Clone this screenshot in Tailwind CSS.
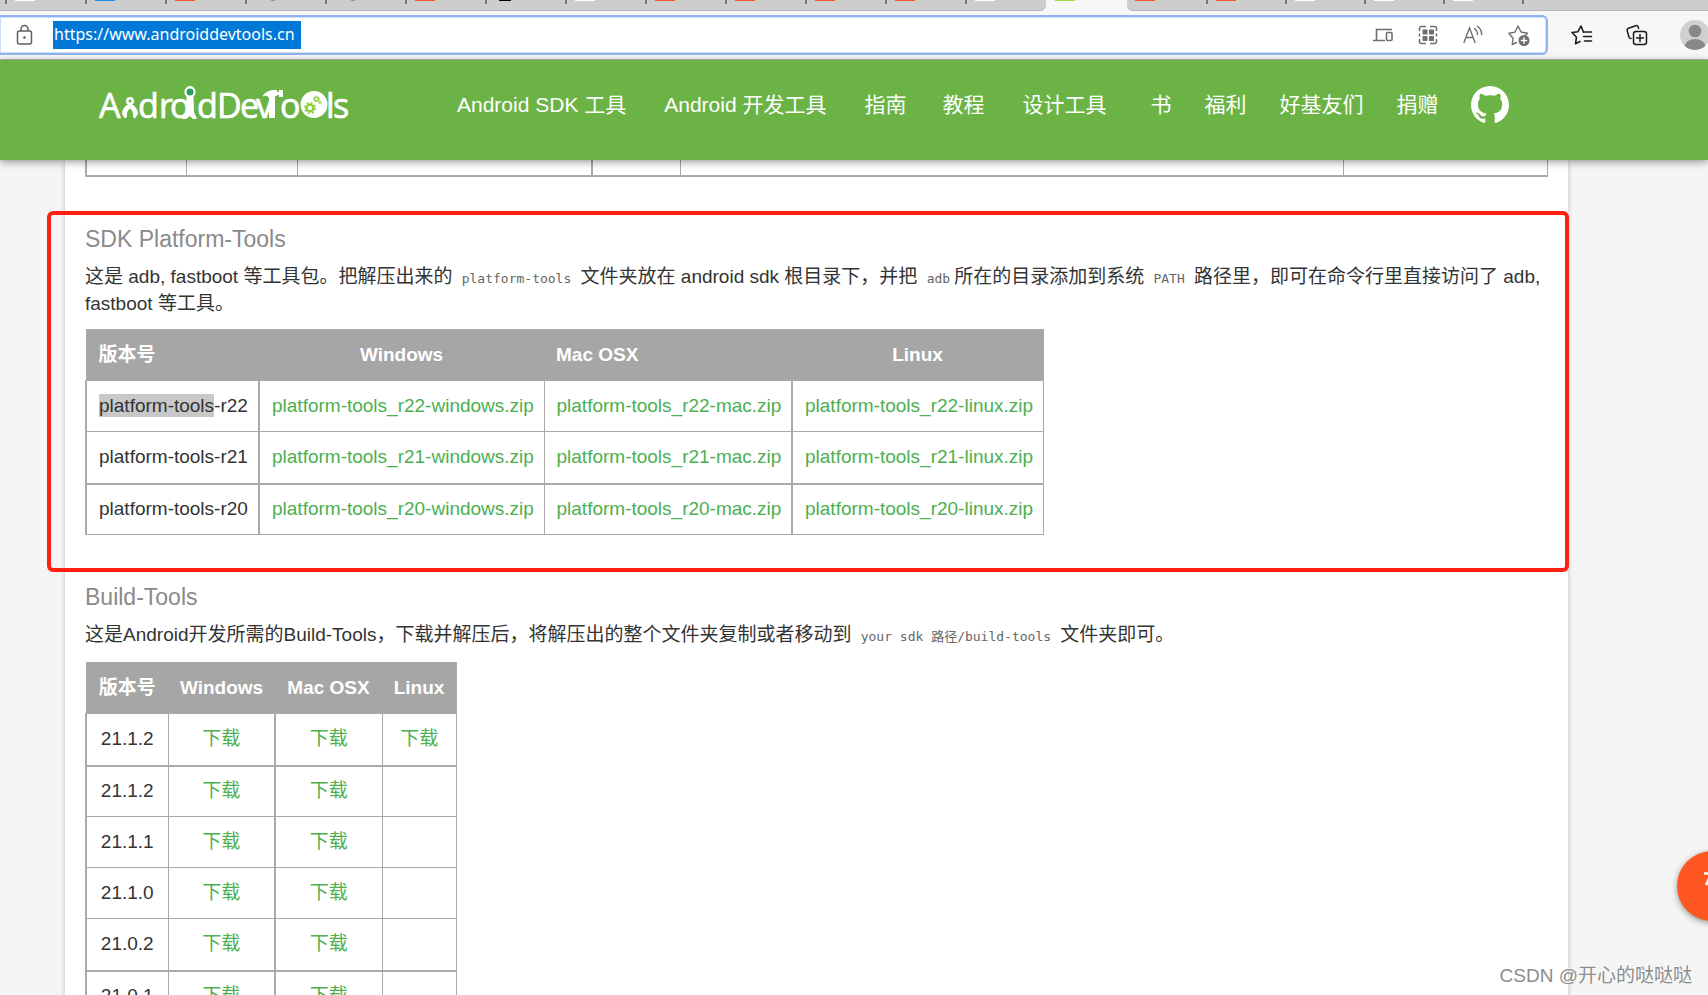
<!DOCTYPE html>
<html lang="zh-CN">
<head>
<meta charset="utf-8">
<title>AndroidDevTools</title>
<script src="https://cdn.jsdelivr.net/npm/@tailwindcss/browser@4"></script>
</head>
<body class="relative flex h-screen flex-col overflow-hidden bg-[#f5f5f5] font-['Liberation_Sans','Noto_Sans_CJK_SC',sans-serif] text-[19px] text-[#333]">

<!-- Browser tab strip -->
<div class="flex h-[11px] w-full shrink-0 bg-[#f7f7f7]">
  <div class="flex w-[1046px] shrink-0 rounded-br-md border-b border-[#b8b8b8] bg-[#cdcdcd] pl-[5px]">
    <div class="w-20 shrink-0"><div class="flex h-1 border-l-2 border-[#777] pl-2"><i class="h-px w-5 bg-white"></i></div></div>
    <div class="w-20 shrink-0"><div class="flex h-1 border-l-2 border-[#777] pl-2"><i class="h-px w-5 bg-[#1e88f0]"></i></div></div>
    <div class="w-20 shrink-0"><div class="flex h-1 border-l-2 border-[#777] pl-2"><i class="h-px w-5 bg-[#fc5531]"></i></div></div>
    <div class="w-20 shrink-0"><div class="flex h-1 border-l-2 border-[#777] pl-6"><i class="h-px w-1 bg-[#999]"></i></div></div>
    <div class="w-20 shrink-0"><div class="flex h-1 border-l-2 border-[#777] pl-6"><i class="h-px w-1 bg-[#999]"></i></div></div>
    <div class="w-20 shrink-0"><div class="flex h-1 border-l-2 border-[#777] pl-2"><i class="h-px w-5 bg-[#fc5531]"></i></div></div>
    <div class="w-20 shrink-0"><div class="flex h-1 border-l-2 border-[#777] pl-3"><i class="h-px w-3 bg-black"></i></div></div>
    <div class="w-20 shrink-0"><div class="flex h-1 border-l-2 border-[#777] pl-2"><i class="h-px w-5 bg-white"></i></div></div>
    <div class="w-20 shrink-0"><div class="flex h-1 border-l-2 border-[#777] pl-2"><i class="h-px w-5 bg-[#fc5531]"></i></div></div>
    <div class="w-20 shrink-0"><div class="flex h-1 border-l-2 border-[#777] pl-2"><i class="h-px w-5 bg-[#fc5531]"></i></div></div>
    <div class="w-20 shrink-0"><div class="flex h-1 border-l-2 border-[#777] pl-2"><i class="h-px w-5 bg-[#fc5531]"></i></div></div>
    <div class="w-20 shrink-0"><div class="flex h-1 border-l-2 border-[#777] pl-2"><i class="h-px w-5 bg-[#fc5531]"></i></div></div>
    <div class="w-20 shrink-0"><div class="flex h-1 border-l-2 border-[#777] pl-2"><i class="h-px w-5 bg-white"></i></div></div>
  </div>
  <div class="flex w-[81px] shrink-0 pl-[9px]"><i class="h-px w-5 bg-[#9be03c]"></i></div>
  <div class="flex flex-1 rounded-bl-md border-b border-[#b8b8b8] bg-[#cdcdcd]">
    <div class="w-[79px] shrink-0"><div class="flex h-1 pl-2"><i class="h-px w-5 bg-[#fc5531]"></i></div></div>
    <div class="w-[79px] shrink-0"><div class="flex h-1 border-l-2 border-[#777] pl-2"><i class="h-px w-5 bg-[#fc5531]"></i></div></div>
    <div class="w-[79px] shrink-0"><div class="flex h-1 border-l-2 border-[#777] pl-2"><i class="h-px w-5 bg-white"></i></div></div>
    <div class="w-[79px] shrink-0"><div class="flex h-1 border-l-2 border-[#777] pl-2"><i class="h-px w-5 bg-white"></i></div></div>
    <div class="w-[79px] shrink-0"><div class="flex h-1 border-l-2 border-[#777] pl-2"><i class="h-px w-5 bg-white"></i></div></div>
    <div class="w-[79px] shrink-0"><div class="h-1 border-l-2 border-[#777]"></div></div>
  </div>
</div>

<!-- Browser toolbar -->
<div class="flex h-[49px] w-full shrink-0 items-center overflow-hidden border-b border-[#b5b5b5] bg-[#f7f7f7]">
  <div class="flex h-10 flex-1 items-center rounded-r-md border-y-2 border-r-2 border-[#90b3ee] bg-white pl-4 pr-[15px] ring-1 ring-inset ring-[#cfe0fa]">
    <button type="button" aria-label="站点信息" class="mr-5 text-[#5f5f5f]">
      <svg width="17" height="22" viewBox="0 0 17 22" fill="none" stroke="currentColor" stroke-width="1.5"><rect x="1.5" y="7" width="14" height="13" rx="2"/><path d="M5 7V5a3.5 3.5 0 0 1 7 0v2"/><circle cx="8.500" cy="13.500" r="1.300" fill="currentColor" stroke="none"/></svg>
    </button>
    <input type="text" aria-label="地址" value="https://www.androiddevtools.cn" class="h-7 w-[248px] bg-[#0078d7] pb-0.5 pl-px font-['Noto_Sans',sans-serif] text-[16px] text-white outline-none">
    <div class="ml-auto flex items-center gap-[23px] text-[#6e6e6e]">
      <button type="button" aria-label="发送到设备"><svg width="22" height="22" viewBox="0 0 22 22" fill="none" stroke="currentColor" stroke-width="1.600"><path d="M4.500 16V5.500H20M1 16.500h12"/><rect x="14.500" y="8.500" width="5.500" height="8" rx="1"/></svg></button>
      <button type="button" aria-label="应用"><svg width="22" height="22" viewBox="0 0 22 22" fill="none" stroke="currentColor" stroke-width="1.500"><path d="M2.500 7V4.500a2 2 0 0 1 2-2H9M13 2.500h4.500a2 2 0 0 1 2 2V7M2.500 15v2.500a2 2 0 0 0 2 2H9M13 19.500h4.500a2 2 0 0 0 2-2V15M2.500 9.500v3M19.500 9.500v3"/><g fill="currentColor" stroke="none"><rect x="5.500" y="5.500" width="5" height="5" rx=".7"/><rect x="12" y="5.500" width="5" height="5" rx=".7"/><rect x="5.500" y="12" width="5" height="5" rx=".7"/><rect x="12" y="12" width="5" height="5" rx=".7"/></g></svg></button>
      <button type="button" aria-label="大声朗读"><svg width="22" height="22" viewBox="0 0 22 22" fill="none" stroke="currentColor" stroke-width="1.400" stroke-linecap="round"><path d="M2 18.500 7.500 4 13 18.500M4 13.500h7M12.500 4.500q3 2.500 3 6M15.500 2.200q4 3 4.200 8.300"/></svg></button>
      <button type="button" aria-label="添加到收藏夹"><svg width="24" height="24" viewBox="0 0 24 24" fill="none" stroke="currentColor" stroke-width="1.400" stroke-linejoin="round" stroke-linecap="round"><path d="M9.500 19.500 5.200 21.500l.8-6.300L1.800 10.300l6.200-1.200L11 3l3 6 6.500 1.200-2 2"/><circle cx="17" cy="17.500" r="5.500" fill="currentColor" stroke="none"/><path d="M17 14.800v5.400M14.300 17.500h5.400" stroke="#fff"/></svg></button>
    </div>
  </div>
  <div class="flex w-40 shrink-0 items-center text-[#1b1b1b]">
    <button type="button" aria-label="收藏夹" class="ml-[23px]"><svg width="22" height="22" viewBox="0 0 22 22" fill="none" stroke="currentColor" stroke-width="1.600" stroke-linejoin="round" stroke-linecap="round"><path d="M12.500 8.200 10 2 7 7.700 1 8.500l4.500 4.700-1 6.500L9 17.500M13.500 8h7M12.500 12.500h8M13.500 17h7"/></svg></button>
    <button type="button" aria-label="集锦" class="ml-[33px]"><svg width="22" height="22" viewBox="0 0 22 22" fill="none" stroke="currentColor" stroke-width="1.500" stroke-linejoin="round" stroke-linecap="round"><path d="M5 14.500q-1.500.2-2-1.200L1.200 6.500q-.4-1.600 1.200-2.200L9.800 1.700q1.700-.5 2.300 1l.5 1.500"/><rect x="7.500" y="7.500" width="13" height="13" rx="2.500"/><path d="M14 10.500v7M10.500 14h7"/></svg></button>
    <button type="button" aria-label="个人资料" class="ml-8 shrink-0"><svg width="30" height="30" viewBox="0 0 30 30"><defs><clipPath id="av"><circle cx="15" cy="15" r="15"/></clipPath></defs><g clip-path="url(#av)"><path fill="#d2d0ce" d="M0 0h30v30H0z"/><circle cx="15" cy="11" r="6.300" fill="#8a8886"/><ellipse cx="15" cy="27" rx="10.500" ry="8" fill="#8a8886"/></g></svg></button>
  </div>
</div>

<!-- Site header -->
<header class="relative z-10 flex h-[100px] shrink-0 items-center bg-[#6bb345] pb-[10px] pl-[99px] text-white shadow-[0_2px_8px_rgba(0,0,0,0.4)]">
  <a href="#" aria-label="AndroidDevTools" class="mr-[106px] shrink-0">
    <svg width="252" height="48" viewBox="0 0 252 48" fill="#fff">
      <text y="37" font-family="Open Sans, Noto Sans, sans-serif" font-size="34" stroke="#fff" stroke-width=".7" x="0 39 60 71 98 118 141 157 181 227 234">AdrodDevols</text>
      <path d="M31 16a4 4 0 0 1 2 7.500c4 2 6 6 6 9.500l-3 4.500-2-1.500c.5-4-.5-7-3-8.500-2.500 1.500-3.500 4.500-3 8.500l-2 1.500-3-4.500c0-3.500 2-7.500 6-9.500A4 4 0 0 1 31 16z"/><circle cx="31" cy="20" r="1.500" fill="#6bb345"/>
      <path d="M91 5a6 6 0 0 1 3.500 10.500L95 31l3 7h-4l-3-3-4 3h-4l4-7 .5-15.500A6 6 0 0 1 91 5z"/><circle cx="91" cy="11" r="3.500" fill="#2c9c62"/>
      <path d="M163 16c3-5 7-7 12-7h3v2h2V9h4v7h-4v-2h-2v1h-2v22h-6V17l-2-2q-3-1-5 1z"/>
      <circle cx="215" cy="23.500" r="13.500"/>
      <g fill="none" stroke="#8bd03c"><circle cx="211" cy="27" r="3.400" stroke-width="2.400"/><circle cx="211" cy="27" r="5.200" stroke-width="1.600" stroke-dasharray="2 2.080"/><circle cx="217.500" cy="18" r="1.900" stroke-width="1.400"/><circle cx="217.500" cy="18" r="3" stroke-width="1" stroke-dasharray="1.200 1.150"/><circle cx="221" cy="21.500" r="1.200" stroke-width="1"/></g>
    </svg>
  </a>
  <nav class="flex items-center whitespace-nowrap text-[21px]">
    <a href="#" class="mr-[38px]">Android SDK 工具</a>
    <a href="#" class="mr-[38px]">Android 开发工具</a>
    <a href="#" class="mr-9">指南</a>
    <a href="#" class="mr-[38px]">教程</a>
    <a href="#" class="mr-11">设计工具</a>
    <a href="#" class="mr-[33px]">书</a>
    <a href="#" class="mr-[33px]">福利</a>
    <a href="#" class="mr-[33px]">好基友们</a>
    <a href="#" class="mr-[33px]">捐赠</a>
    <a href="#" aria-label="GitHub"><svg width="38" height="38" viewBox="0 0 16 16" fill="#fff"><path d="M8 0C3.580 0 0 3.580 0 8c0 3.540 2.290 6.530 5.470 7.590.4.070.55-.17.55-.38 0-.19-.01-.82-.01-1.490-2.010.37-2.530-.49-2.690-.94-.09-.23-.48-.94-.82-1.130-.28-.15-.68-.52-.01-.53.63-.01 1.080.58 1.230.82.72 1.210 1.870.87 2.330.66.070-.52.28-.87.51-1.070-1.780-.2-3.640-.89-3.640-3.950 0-.87.31-1.590.82-2.150-.08-.2-.36-1.020.08-2.120 0 0 .67-.21 2.200.82.64-.18 1.320-.27 2-.27s1.360.09 2 .27c1.530-1.040 2.200-.82 2.200-.82.44 1.100.16 1.920.08 2.120.51.56.82 1.270.82 2.150 0 3.070-1.870 3.750-3.650 3.950.29.25.54.73.54 1.480 0 1.070-.01 1.930-.01 2.200 0 .21.15.46.55.38A8.010 8.010 0 0 0 16 8c0-4.420-3.580-8-8-8z"/></svg></a>
  </nav>
</header>

<main class="flex-1 overflow-hidden">
  <div class="ml-[65px] mr-[140px] min-h-full bg-white px-5 shadow-[0_1px_5px_rgba(0,0,0,0.22)]">
    <!-- Tail of the preceding table -->
    <table class="w-full table-fixed border-collapse">
      <colgroup><col class="w-[100px]"><col class="w-[111px]"><col class="w-[295px]"><col class="w-[88px]"><col><col class="w-[204px]"></colgroup>
      <tbody><tr class="h-4"><td class="border-x border-b-2 border-l-2 border-[#aaa] p-0"></td><td class="border-x border-b-2 border-[#aaa] p-0"></td><td class="border-x border-b-2 border-r-2 border-[#aaa] p-0"></td><td class="border-x border-b-2 border-[#aaa] p-0"></td><td class="border-x border-b-2 border-[#aaa] p-0"></td><td class="border-x border-b-2 border-[#aaa] p-0"></td></tr></tbody>
    </table>

    <section class="relative pt-[47px]">
      <h2 class="text-[23px] leading-[30px] text-[#8a8a8a]">SDK Platform-Tools</h2>
      <p class="mt-[9px] leading-[27px]">这是 adb, fastboot 等工具包。把解压出来的 <code class="px-1 font-['DejaVu_Sans_Mono','Noto_Sans_CJK_SC',monospace] text-[13px] leading-none text-[#666]">platform-tools</code> 文件夹放在 android sdk 根目录下，并把 <code class="px-1 font-['DejaVu_Sans_Mono','Noto_Sans_CJK_SC',monospace] text-[13px] leading-none text-[#666]">adb</code>所在的目录添加到系统 <code class="px-1 font-['DejaVu_Sans_Mono','Noto_Sans_CJK_SC',monospace] text-[13px] leading-none text-[#666]">PATH</code> 路径里，即可在命令行里直接访问了 adb, fastboot 等工具。</p>
      <table class="mt-3 w-[959px] table-fixed border-collapse whitespace-nowrap [&_a]:text-[#4caf50] [&_td]:border [&_td]:border-[#aaa] [&_td]:px-3 [&_td:first-child]:border-x-2 [&_td:nth-child(3)]:border-r-2 [&_th]:px-3">
        <colgroup><col class="w-[173px]"><col class="w-[285px]"><col class="w-[248px]"><col></colgroup>
        <thead class="border border-[#aaa] bg-[#a6a6a6] text-white"><tr class="h-[51px]"><th class="text-left">版本号</th><th>Windows</th><th class="text-left">Mac OSX</th><th>Linux</th></tr></thead>
        <tbody>
          <tr class="h-[51px]"><td><span class="bg-[#c8c8c8] py-px">platform-tools</span>-r22</td><td><a href="#">platform-tools_r22-windows.zip</a></td><td><a href="#">platform-tools_r22-mac.zip</a></td><td><a href="#">platform-tools_r22-linux.zip</a></td></tr>
          <tr class="h-[52px] [&>td]:border-b-2"><td>platform-tools-r21</td><td><a href="#">platform-tools_r21-windows.zip</a></td><td><a href="#">platform-tools_r21-mac.zip</a></td><td><a href="#">platform-tools_r21-linux.zip</a></td></tr>
          <tr class="h-[51px]"><td>platform-tools-r20</td><td><a href="#">platform-tools_r20-windows.zip</a></td><td><a href="#">platform-tools_r20-mac.zip</a></td><td><a href="#">platform-tools_r20-linux.zip</a></td></tr>
        </tbody>
      </table>
      <!-- Red highlight frame around the section -->
      <div class="pointer-events-none absolute -bottom-[37px] -left-[38px] -right-[21px] top-[34px] rounded-md border-4 border-[#ff2012]"></div>
    </section>

    <section class="pt-[47px]">
      <h2 class="text-[23px] leading-[30px] text-[#8a8a8a]">Build-Tools</h2>
      <p class="mt-[9px] leading-[27px]">这是Android开发所需的Build-Tools，下载并解压后，将解压出的整个文件夹复制或者移动到 <code class="px-1 font-['DejaVu_Sans_Mono','Noto_Sans_CJK_SC',monospace] text-[13px] leading-none text-[#666]">your sdk 路径/build-tools</code> 文件夹即可。</p>
      <table class="mt-[14px] w-[372px] table-fixed border-collapse whitespace-nowrap text-center [&_a]:text-[#4caf50] [&_td]:border [&_td]:border-[#aaa] [&_td]:p-0 [&_td:first-child]:border-l-2 [&_td:nth-child(2)]:border-r-2 [&_th]:p-0">
        <colgroup><col class="w-[82px]"><col class="w-[107px]"><col class="w-[107px]"><col></colgroup>
        <thead class="border border-[#aaa] bg-[#a6a6a6] text-white"><tr class="h-[51px]"><th>版本号</th><th>Windows</th><th>Mac OSX</th><th>Linux</th></tr></thead>
        <tbody>
          <tr class="h-[52px] [&>td]:border-b-2"><td>21.1.2</td><td><a href="#">下载</a></td><td><a href="#">下载</a></td><td><a href="#">下载</a></td></tr>
          <tr class="h-[51px]"><td>21.1.2</td><td><a href="#">下载</a></td><td><a href="#">下载</a></td><td></td></tr>
          <tr class="h-[51px]"><td>21.1.1</td><td><a href="#">下载</a></td><td><a href="#">下载</a></td><td></td></tr>
          <tr class="h-[51px]"><td>21.1.0</td><td><a href="#">下载</a></td><td><a href="#">下载</a></td><td></td></tr>
          <tr class="h-[52px] [&>td]:border-b-2"><td>21.0.2</td><td><a href="#">下载</a></td><td><a href="#">下载</a></td><td></td></tr>
          <tr class="h-[51px]"><td>21.0.1</td><td><a href="#">下载</a></td><td><a href="#">下载</a></td><td></td></tr>
        </tbody>
      </table>
    </section>
  </div>
</main>

<!-- Floating action button, cut off by the window edge -->
<button type="button" aria-label="更多" class="absolute -right-[39px] bottom-[74px] z-20 size-[70px] rounded-full bg-[#ff5722] shadow-[0_2px_6px_rgba(0,0,0,0.4)]">
  <svg width="70" height="70" viewBox="0 0 70 70" fill="none" stroke="#fff" stroke-width="2.500"><path d="M27 22.500h16M33 23q-1 6-4 11"/></svg>
</button>
<div class="absolute bottom-[5px] right-4 z-20 text-[19px] leading-7 text-[#8c8c8c] [text-shadow:-1px_-1px_0_rgba(255,255,255,0.8)]">CSDN @开心的哒哒哒</div>
</body>
</html>
